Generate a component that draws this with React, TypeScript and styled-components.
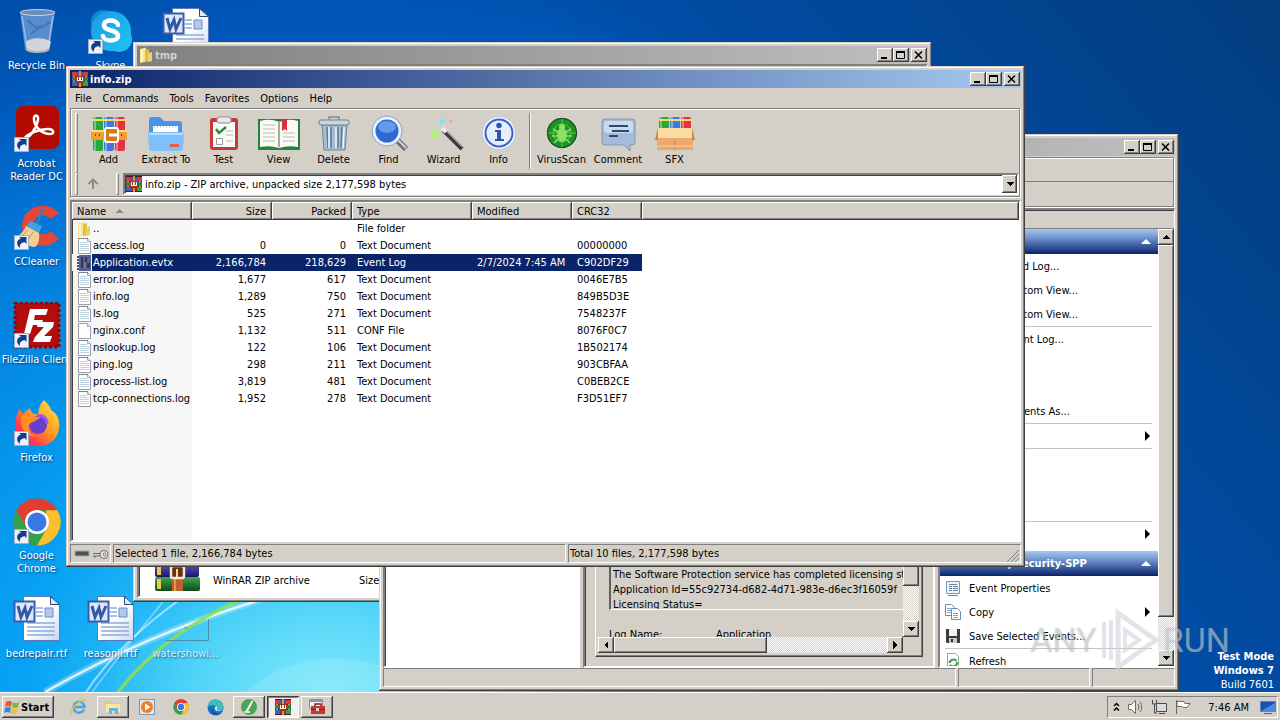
import React from "react";
import styled, { createGlobalStyle, css } from "styled-components";

const face = "#d4d0c8";
const navy = "#0a246a";

const raised = css`
  background-color: ${face};
  box-shadow: inset -1px -1px #404040, inset 1px 1px #ffffff, inset -2px -2px #808080;
`;

const sunken = css`
  border: 2px solid;
  border-color: #808080 #ffffff #ffffff #808080;
  box-shadow: inset 1px 1px #404040;
`;

const etched = css`
  border: 1px solid #808080;
  box-shadow: inset 1px 1px #ffffff, 1px 1px #ffffff;
`;

const GlobalStyle = createGlobalStyle`
  * { box-sizing: border-box; }
  body { margin: 0; }
  body, button, select, table {
    font-family: "DejaVu Sans Condensed", "Noto Sans", sans-serif;
    font-size: 11px;
    line-height: 13px;
    color: #000000;
  }
  button { border: 0; padding: 0; background: transparent; }
  svg { display: block; flex: none; }
`;

/* ---------- desktop ---------- */

const Screen = styled.div`
  display: flex;
  flex-direction: column;
  height: 100vh;
  overflow: hidden;
`;

const Desktop = styled.main`
  position: relative;
  flex: 1;
  min-height: 0;
  overflow: hidden;
  background:
    radial-gradient(ellipse 240px 130px at 330px 690px, rgba(130, 235, 250, 0.75), transparent),
    radial-gradient(ellipse 860px 740px at 330px 700px, #63dcf9 0%, #38c8f8 16%, #08a2f4 36%, #0590e8 54%, #0274d6 74%, #0058ba 90%, #004fac 100%);
`;

const Wallpaper = styled.svg`
  position: absolute;
  left: 0;
  bottom: 0;
`;

const CornerGlow = styled.div`
  position: absolute;
  inset: 0;
  background: linear-gradient(50deg, transparent 60%, rgba(4, 58, 118, 0.85) 100%);
`;

const IconGrid = styled.div`
  position: relative;
  display: grid;
  grid-template-columns: 73px repeat(2, 75px);
  grid-auto-rows: 98px;
`;

const Shortcut = styled.button<{ $col: number; $row: number; $faded?: boolean }>`
  grid-column: ${(p) => p.$col};
  grid-row: ${(p) => p.$row};
  display: flex;
  flex-direction: column;
  align-items: center;
  gap: 3px;
  padding: 8px 0 0;
  color: #ffffff;
  opacity: ${(p) => (p.$faded ? 0.8 : 1)};
  text-shadow: 1px 1px 2px rgba(0, 30, 80, 0.8);
  white-space: pre;
`;

const Build = styled.div`
  position: absolute;
  right: 6px;
  bottom: 0;
  display: flex;
  flex-direction: column;
  text-align: right;
  color: #ffffff;
  line-height: 14px;
`;

const Watermark = styled.div`
  position: absolute;
  right: 50px;
  bottom: 20px;
  display: flex;
  align-items: center;
  gap: 2px;
  color: rgba(205, 210, 216, 0.55);
  font-family: Roboto, sans-serif;
  font-size: 34px;
  line-height: 64px;
  text-shadow: 0 0 2px rgba(110, 120, 130, 0.3);
`;

/* ---------- windows ---------- */

const Frame = styled.section<{ $inset: string }>`
  position: absolute;
  inset: ${(p) => p.$inset};
  display: flex;
  flex-direction: column;
  padding: 4px;
  background: ${face};
  box-shadow: inset -1px -1px #404040, inset 1px 1px ${face}, inset -2px -2px #808080, inset 2px 2px #ffffff;
`;

const TitleBar = styled.header<{ $active?: boolean }>`
  display: flex;
  flex: none;
  align-items: center;
  gap: 2px;
  height: 18px;
  padding: 0 1px 0 2px;
  color: ${(p) => (p.$active ? "#ffffff" : face)};
  background: ${(p) =>
    p.$active ? "linear-gradient(to right, #0a246a, #a6caf0)" : "linear-gradient(to right, #808080, #c0c0c0)"};
`;

const Title = styled.h1`
  flex: 1;
  margin: 0;
  font-size: 11px;
  font-weight: bold;
`;

const CaptionButton = styled.button<{ $gap?: boolean }>`
  ${raised}
  display: flex;
  align-items: center;
  justify-content: center;
  width: 16px;
  height: 14px;
  margin-left: ${(p) => (p.$gap ? "0" : "-2px")};
`;

const TitleButtons = () => (
  <>
    <CaptionButton aria-label="Minimize">
      <svg width="12" height="10"><path d="M2 8h6" stroke="#000" strokeWidth="2" /></svg>
    </CaptionButton>
    <CaptionButton aria-label="Maximize">
      <svg width="12" height="10" fill="none" stroke="#000"><path d="M1.500 1.500h8v7h-8zM1 1.500h9M1 2.500h9" /></svg>
    </CaptionButton>
    <CaptionButton $gap aria-label="Close">
      <svg width="12" height="10"><path d="M2 1.500l7 7M9 1.500l-7 7" stroke="#000" strokeWidth="1.500" /></svg>
    </CaptionButton>
  </>
);

const StatusBar = styled.footer`
  display: flex;
  flex: none;
  gap: 2px;
  height: 19px;
`;

const StatusCell = styled.div<{ $width?: string }>`
  display: flex;
  flex: ${(p) => (p.$width ? `0 0 ${p.$width}` : "1 1 0")};
  align-items: center;
  gap: 2px;
  padding: 0 1px;
  border: 1px solid;
  border-color: #808080 #ffffff #ffffff #808080;
  white-space: nowrap;
`;

const Grip = styled.svg`
  margin: auto 0 0 auto;
`;

/* ---------- archive window ---------- */

const MenuBar = styled.nav`
  display: flex;
  flex: none;
  height: 20px;
`;

const MenuItem = styled.button`
  padding: 0 6px 0 5px;
`;

const ToolArea = styled.div`
  ${etched}
  flex: none;
  display: flex;
  flex-direction: column;
  height: 89px;
  margin-right: 1px;
  padding: 4px 0 1px 4px;
`;

const ToolRow = styled.div`
  display: flex;
  align-items: stretch;
  height: 60px;
`;

const Gripper = styled.div`
  flex: none;
  width: 3px;
  border: 1px solid;
  border-color: #ffffff #808080 #808080 #ffffff;
`;

const ToolSet = styled.div`
  display: flex;
  padding-left: 3px;
`;

const ToolButton = styled.button<{ $width?: number }>`
  display: flex;
  flex: none;
  flex-direction: column;
  align-items: center;
  gap: 1px;
  width: ${(p) => p.$width ?? 55}px;
  padding-top: 3px;
  white-space: nowrap;
`;

const ToolDivider = styled.div`
  width: 2px;
  margin: 0 3px 4px;
  border-left: 1px solid #808080;
  border-right: 1px solid #ffffff;
`;

const AddressRow = styled.div`
  display: flex;
  align-items: stretch;
  height: 22px;
`;

const UpButton = styled.button`
  display: flex;
  align-items: center;
  justify-content: center;
  width: 38px;
  padding-right: 8px;
`;

const Combo = styled.label`
  ${sunken}
  position: relative;
  display: flex;
  flex: 1;
  align-items: center;
  gap: 3px;
  margin-left: 4px;
  padding-left: 1px;
  background: #ffffff;
`;

const ComboSelect = styled.select`
  flex: 1;
  align-self: stretch;
  padding: 0;
  border: 0;
  outline: 0;
  appearance: none;
  background: transparent;
`;

const ComboArrow = styled.span`
  ${raised}
  display: flex;
  align-items: center;
  justify-content: center;
  align-self: stretch;
  width: 15px;
  pointer-events: none;
`;

const FileList = styled.div`
  ${sunken}
  flex: 1;
  min-height: 0;
  margin: 3px 0 2px;
  overflow: hidden;
  background: linear-gradient(to right, #f6f6f6 120px, #ffffff 120px);
`;

const Table = styled.table`
  width: 100%;
  table-layout: fixed;
  border-collapse: collapse;
`;

const HeadCell = styled.th<{ $right?: boolean }>`
  ${raised}
  height: 18px;
  padding: 0 6px 0 5px;
  font-weight: normal;
  text-align: ${(p) => (p.$right ? "right" : "left")};
`;

const HeadLabel = styled.span`
  display: flex;
  align-items: center;
  gap: 9px;
`;

const Row = styled.tr<{ $selected?: boolean }>`
  height: 17px;
  color: ${(p) => (p.$selected ? "#ffffff" : "#000000")};
  td:not(:last-child) { background: ${(p) => (p.$selected ? navy : "transparent")}; }
  td:first-child { background: ${(p) => (p.$selected ? `linear-gradient(to right, #f6f6f6 20px, ${navy} 20px)` : "transparent")}; }
`;

const Cell = styled.td<{ $right?: boolean }>`
  padding: 0 6px 0 5px;
  white-space: nowrap;
  text-align: ${(p) => (p.$right ? "right" : "left")};
`;

const NameCell = styled.td`
  padding: 0 0 0 5px;
`;

const NameLabel = styled.span`
  display: flex;
  align-items: center;
  gap: 2px;
  height: 17px;
  white-space: nowrap;
`;

/* ---------- folder window ---------- */

const FolderView = styled.div`
  ${sunken}
  flex: 1;
  display: flex;
  align-items: flex-end;
  padding: 0 0 4px 14px;
  background: #ffffff;
`;

const FolderText = styled.span<{ $first?: boolean }>`
  width: 146px;
  margin: 0 0 5px ${(p) => (p.$first ? "12px" : "0")};
  white-space: nowrap;
`;

/* ---------- event viewer ---------- */

const Rebar = styled.div`
  ${etched}
  flex: none;
  margin: 1px 1px 1px 0;
`;

const RebarRow = styled.div<{ $line?: boolean }>`
  height: 24px;
  border-bottom: ${(p) => (p.$line ? "1px solid #808080" : "0")};
`;

const Panes = styled.div`
  display: flex;
  flex: 1;
  gap: 3px;
  min-height: 0;
`;

const TreePane = styled.div`
  ${sunken}
  width: 197px;
  background: #ffffff;
`;

const DetailPane = styled.div`
  ${sunken}
  display: flex;
  flex: 1;
  min-width: 0;
  padding: 0 10px 9px;
`;

const DetailPanel = styled.div`
  display: flex;
  flex: 1;
  flex-direction: column;
  min-width: 0;
  padding: 2px 3px 3px 2px;
  border: 1px solid;
  border-color: #ffffff #404040 #404040 #ffffff;
  box-shadow: inset -1px -1px #808080;
`;

const DetailRow = styled.div<{ $grow?: boolean }>`
  display: flex;
  flex: ${(p) => (p.$grow ? "1" : "none")};
  min-height: 0;
`;

const DetailContent = styled.div`
  display: flex;
  flex: 1;
  flex-direction: column;
  justify-content: flex-end;
  min-width: 0;
  overflow: hidden;
  padding-left: 11px;
`;

const Message = styled.p`
  height: 64px;
  margin: 0;
  padding: 21px 0 0 2px;
  overflow: hidden;
  border-left: 2px solid #606060;
  border-bottom: 1px solid #ffffff;
  line-height: 15px;
  white-space: pre;
`;

const Fields = styled.dl`
  display: grid;
  grid-template-columns: 107px 1fr;
  height: 27px;
  margin: 0;
  padding-top: 17px;
  overflow: hidden;
  line-height: 15px;
  dd { margin: 0; }
`;

const ScrollTrack = styled.div<{ $row?: boolean }>`
  display: flex;
  flex: ${(p) => (p.$row ? "1" : "none")};
  flex-direction: ${(p) => (p.$row ? "row" : "column")};
  width: ${(p) => (p.$row ? "auto" : "16px")};
  height: ${(p) => (p.$row ? "16px" : "auto")};
  background: conic-gradient(#ffffff 25%, ${face} 0 50%, #ffffff 0 75%, ${face} 0) 0 0 / 2px 2px;
`;

const ScrollThumb = styled.div<{ $flex: string }>`
  ${raised}
  flex: ${(p) => p.$flex};
`;

const ScrollSpace = styled.div<{ $flex: string }>`
  flex: ${(p) => p.$flex};
`;

const ScrollButton = styled.button`
  ${raised}
  display: flex;
  flex: none;
  align-items: center;
  justify-content: center;
  width: 16px;
  height: 16px;
`;

const Corner = styled.div`
  width: 16px;
`;

const ActionPane = styled.aside`
  ${sunken}
  display: flex;
  flex-direction: column;
  width: 237px;
  border-right-width: 1px;
`;

const PaneCaption = styled.div`
  flex: none;
  height: 19px;
  border-bottom: 1px solid #808080;
`;

const ActionBody = styled.div`
  display: flex;
  flex: 1;
  min-height: 0;
`;

const ActionList = styled.div`
  flex: 1;
  min-width: 0;
  overflow: hidden;
  background: #ffffff;
`;

const GroupHeader = styled.h2<{ $spaced?: boolean }>`
  display: flex;
  align-items: center;
  justify-content: space-between;
  height: 25px;
  margin: ${(p) => (p.$spaced ? "5px" : "0")} 0 0;
  padding: 0 7px 0 5px;
  color: #ffffff;
  font-size: 11px;
  font-weight: bold;
  white-space: nowrap;
  background: linear-gradient(to bottom, #a6caf0, #5f83c0 45%, #0a246a);
`;

const Action = styled.button`
  display: flex;
  align-items: center;
  gap: 8px;
  width: 100%;
  height: 24px;
  padding: 0 6px 0 5px;
  white-space: nowrap;
  text-align: left;
  span { flex: 1; }
`;

const ActionGlyph = styled.i`
  flex: none;
  width: 16px;
`;

const Blank = styled.div<{ $rows: number }>`
  height: ${(p) => p.$rows * 24}px;
`;

const Rule = styled.hr`
  height: 1px;
  margin: 0 6px 0 5px;
  border: 0;
  background: #c4c4c4;
`;

/* ---------- taskbar ---------- */

const Taskbar = styled.footer`
  display: flex;
  flex: none;
  align-items: center;
  justify-content: space-between;
  height: 28px;
  padding: 1px 2px 0;
  background: ${face};
  border-top: 1px solid #ffffff;
`;

const TaskGroup = styled.div`
  display: flex;
  gap: 2px;
`;

const StartButton = styled.button`
  ${raised}
  display: flex;
  align-items: center;
  gap: 1px;
  width: 52px;
  height: 22px;
  margin-right: 7px;
  padding-left: 2px;
  font-weight: bold;
`;

const TaskButton = styled.button<{ $state?: "open" | "active" }>`
  display: flex;
  align-items: center;
  justify-content: center;
  width: 32px;
  height: 22px;
  ${(p) => p.$state === "open" && raised}
  ${(p) =>
    p.$state === "active" &&
    css`
      background: #f2f0ee;
      box-shadow: inset 1px 1px #404040, inset -1px -1px #ffffff, inset 2px 2px #808080;
    `}
`;

const Tray = styled.div`
  display: flex;
  align-items: center;
  gap: 7px;
  height: 22px;
  padding: 0 1px 0 5px;
  border: 1px solid;
  border-color: #808080 #ffffff #ffffff #808080;
`;

const Clock = styled.time`
  margin: 0 4px 0 10px;
`;

/* ---------- drawings ---------- */

const ArrowMark = ({ dir, color = "#000" }: { dir: "up" | "down" | "left" | "right"; color?: string }) => {
  const d = { up: "M4 0l4 4H0z", down: "M0 0h8L4 4z", left: "M4 0v8L0 4z", right: "M0 0v8l4-4z" }[dir];
  const tall = dir === "left" || dir === "right";
  return <svg width={tall ? 5 : 8} height={tall ? 8 : 5} shapeRendering="crispEdges"><path d={d} fill={color} /></svg>;
};

const HeaderArrow = () => <svg width="10" height="6"><path d="M5 0l5 5H0z" fill="#fff" /></svg>;
const SubmenuArrow = () => <svg width="8" height="10"><path d="M1 0v10l5-5z" fill="#000" /></svg>;

const LinkBadge = () => (
  <g>
    <path d="M1.500 31.500h14v14h-14z" fill="#eef2f8" stroke="#9fb0c8" />
    <path d="M7 44c-4-3-4-8 1-9.500L6 33h7.500v7l-2-2c-4 1-5 3-4.500 6z" fill="#123f8c" />
  </g>
);

const RarIcon = ({ size = 16 }: { size?: number }) => (
  <svg width={size} height={size} viewBox="0 0 16 16" shapeRendering="crispEdges">
    <path d="M0 0h16v16H0z" fill="#4a1a28" />
    <path d="M0 1h5v4H0zM11 1h5v4h-5z" fill="#d8343c" />
    <path d="M5 1h2v4H5zM9 1h2v4H9z" fill="#3a58b8" />
    <path d="M0 6h5v4H0zM11 6h5v4h-5z" fill="#2f7f58" />
    <path d="M0 11h5v4H0z" fill="#3f5cc8" />
    <path d="M11 11h5v4h-5z" fill="#39a03c" />
    <path d="M5 11h6v4H5z" fill="#8a3030" />
    <path d="M7 0h2v5H7zM7 12h2v4H7z" fill="#d89048" />
    <path d="M4 5h8v6H4z" fill="#b02c20" />
    <path d="M5 6h1v4H5zM10 6h1v4h-1zM6 9h4v1H6zM7 6h2v3H7z" fill="#fff3d0" />
    <path d="M1 5h2v1H1zM13 5h2v1h-2zM1 10h2v1H1zM13 10h2v1h-2z" fill="#d0a840" />
  </svg>
);

const BigRar = () => (
  <svg width="48" height="48" viewBox="0 0 48 48">
    <defs>
      <linearGradient id="bk1" x2="0" y2="1"><stop stopColor="#d04a5a" /><stop offset="1" stopColor="#7a1424" /></linearGradient>
      <linearGradient id="bk2" x2="0" y2="1"><stop stopColor="#5a58d8" /><stop offset="1" stopColor="#1c1468" /></linearGradient>
      <linearGradient id="bk3" x2="0" y2="1"><stop stopColor="#3fa84a" /><stop offset="1" stopColor="#0c4a1c" /></linearGradient>
    </defs>
    <rect x="2" y="6" width="44" height="13" rx="2" fill="url(#bk1)" />
    <rect x="2" y="19" width="44" height="14" rx="2" fill="url(#bk2)" />
    <rect x="2" y="33" width="45" height="14" rx="2" fill="url(#bk3)" />
    <path d="M4 8h4v10H4zM4 21h4v10H4zM4 35h4v10H4z" fill="#e8c850" />
    <path d="M19 5h11v42H19z" fill="#b8622c" />
    <path d="M21 5h2v42h-2z" fill="#e09850" />
    <rect x="18" y="22" width="13" height="12" rx="2" fill="#6a3010" stroke="#f2e8d8" strokeWidth="2.500" />
    <path d="M24 25v8" stroke="#ffd890" strokeWidth="2" />
  </svg>
);

const Folder = () => (
  <svg width="14" height="16" viewBox="0 0 14 16">
    <path d="M1 2l6-1.500v14L1 16z" fill="#f6e58e" />
    <path d="M6 3l4-1v12l-4 1z" fill="#e2bd3f" />
    <path d="M9 6l4-1v9l-4 1z" fill="#ecd06a" />
    <path d="M2 3l2-.5v12L2 15z" fill="#fff7c2" />
  </svg>
);

const FileGlyph = ({ kind }: { kind: string }) => {
  if (kind === "up") return <Folder />;
  if (kind === "evtx")
    return (
      <svg width="14" height="16">
        <path d="M2 0h12v16H2z" fill="#56618c" />
        <path d="M0 1h2v2H0zM0 4h2v2H0zM0 7h2v2H0zM0 10h2v2H0zM0 13h2v2H0z" fill="#454b70" />
        <path d="M4 2h2v11H4zM8 2h2v5H8zM10 8h3v5h-3z" fill="#33375c" />
        <path d="M7 8h2v5H7z" fill="#8a6f84" />
      </svg>
    );
  return (
    <svg width="14" height="16">
      <path d="M1.500.5h9l3 3v12h-12z" fill="#fdfefe" stroke="#9a9ea4" />
      <path d="M10.500.5v3h3" fill="#e4e8ec" stroke="#a8acb2" />
      {kind === "txt" && <path d="M3 4.500h7M3 6.500h9M3 8.500h9M3 10.500h9M3 12.500h9" stroke="#bcd2de" />}
      {kind === "txt" && <path d="M2 .5h9" stroke="#686c70" strokeDasharray="1 1" />}
    </svg>
  );
};

const WordDoc = () => (
  <svg width="48" height="48" viewBox="0 0 48 48">
    <defs><linearGradient id="pg" x2="1" y2="1"><stop offset=".5" stopColor="#fff" /><stop offset="1" stopColor="#c9d6f4" /></linearGradient></defs>
    <path d="M10.500.5h27l9 8v36h-36z" fill="url(#pg)" stroke="#5c78b8" />
    <path d="M37.500.5v8h9z" fill="#dfe8fa" stroke="#2c4678" />
    <path d="M23 12h7M23 16h7M23 20h7M14 27h28M14 31h28M14 35h28M14 39h28" stroke="#8faadc" strokeWidth="1.400" />
    <path d="M32 12h8v9h-8z" fill="#b4c6ea" stroke="#6e8cc8" />
    <path d="M1.500 5.500h20v20h-20z" fill="#dfe8f8" stroke="#3a5cae" strokeWidth="2" />
    <path d="M5 10l3 11 4-9 2 9 5-11" fill="none" stroke="#3257a8" strokeWidth="3" />
  </svg>
);

const Firefox = () => (
  <svg width="48" height="48" viewBox="0 0 48 48">
    <defs><linearGradient id="ff" x1="1" x2="0" y2="1"><stop stopColor="#fff04a" /><stop offset=".45" stopColor="#ff9a20" /><stop offset=".75" stopColor="#ff3850" /><stop offset="1" stopColor="#d8208a" /></linearGradient></defs>
    <path d="M31 0c3 3 6 6 7 10 7 4 9 11 8 18-1 11-10 18-21 18C12 46 2 38 2 26c0-7 2-11 4-17 2 2 3 3 3 5l8-6c0 2 2 5 4 6h4c1-6 2-10 6-14z" fill="url(#ff)" />
    <circle cx="25" cy="25" r="9" fill="#6a3cd0" />
    <path d="M9 16c6-3 9-1 12 1h6c-1 3-5 3-6 5-3 0-6 2-5 7 0 4 4 7 9 7-11 3-19-8-16-20z" fill="#ff9020" />
    <path d="M24 16c5-2 10 2 10 8" stroke="#9258f0" strokeWidth="3" fill="none" />
    <LinkBadge />
  </svg>
);

const ChromeMark = () => (
  <>
    <circle cx="24" cy="24" r="23.500" fill="#35a04c" />
    <path d="M24 .5a23.500 23.500 0 0 1 20.400 11.700H24L13.800 30 3.600 12.200A23.500 23.500 0 0 1 24 .5z" fill="#e23d30" />
    <path d="M44.400 12.200A23.500 23.500 0 0 1 24 47.500L34.200 30 33 12.200z" fill="#fbc02c" />
    <circle cx="24" cy="24" r="12" fill="#fff" />
    <circle cx="24" cy="24" r="9.500" fill="#3b78e7" />
  </>
);

const shortcuts: { label: string; col: number; row: number; faded?: boolean; icon: React.ReactNode }[] = [
  {
    label: "Recycle Bin", col: 1, row: 1,
    icon: (
      <svg width="48" height="48" viewBox="0 0 48 48">
        <path d="M7 4l5 37c3 4 20 4 24 0l6-37z" fill="#9cbfe6" opacity=".55" />
        <path d="M13 34c4-5 20-5 25 0l-2 8c-5 3-17 3-22 0z" fill="#e4e2dc" opacity=".85" />
        <ellipse cx="24.500" cy="4.500" rx="17.500" ry="3" fill="#6d8cb8" stroke="#c4d4e6" />
        <path d="M9 8l5 32M40 8l-5 32" stroke="#dfeaf6" strokeWidth="1.500" opacity=".5" />
        <path d="M15 12c8 10 12 10 22 2M18 26l10-8" stroke="#3a68b0" strokeWidth="2" fill="none" opacity=".7" />
        <path d="M13 41c4 4 19 4 23 0" stroke="#b7b4ac" strokeWidth="2" fill="none" />
      </svg>
    ),
  },
  {
    label: "Skype", col: 2, row: 1,
    icon: (
      <svg width="48" height="48" viewBox="0 0 48 48">
        <defs><linearGradient id="sk" x2="1" y2="1"><stop stopColor="#1a9be0" /><stop offset="1" stopColor="#20c4f4" /></linearGradient></defs>
        <circle cx="16" cy="14" r="12" fill="#1486d8" /><circle cx="32" cy="31" r="13" fill="#25b9ee" />
        <circle cx="24" cy="23" r="20" fill="url(#sk)" />
        <path d="M31 17c-1-6-14-6-14 0 0 7 14 4 14 11 0 6-14 6-15 0" stroke="#fff" strokeWidth="4.500" fill="none" strokeLinecap="round" />
        <LinkBadge />
      </svg>
    ),
  },
  { label: "", col: 3, row: 1, icon: <WordDoc /> },
  {
    label: "Acrobat\nReader DC", col: 1, row: 2,
    icon: (
      <svg width="48" height="48" viewBox="0 0 48 48">
        <rect x="3" y="0" width="43" height="43" rx="7" fill="#b30b00" />
        <path d="M11 33c5-1 12-9 14-19 1-6-5-6-4 0 1 8 9 14 16 14 5 0 4-5-2-5-8 0-20 4-24 10z" fill="none" stroke="#fff" strokeWidth="2.500" />
        <LinkBadge />
      </svg>
    ),
  },
  {
    label: "CCleaner", col: 1, row: 3,
    icon: (
      <svg width="48" height="48" viewBox="0 0 48 48">
        <path d="M46 9C37-3 12-1 9 20c-1 18 20 30 37 15l-8-8c-7 6-17 3-17-7 0-9 11-12 17-5z" fill="#e4473a" />
        <path d="M29 4l2 1-6 16-3-1z" fill="#2c84bc" />
        <path d="M17 17l12 5-3 7-13-6z" fill="#3fa2dc" />
        <path d="M13 22l13 7c1 7-1 12-4 14-7 0-16-6-19-10 4-2 8-6 10-11z" fill="#f0cf96" />
        <path d="M9 32l6-6M15 36l5-8" stroke="#c89c58" />
        <LinkBadge />
      </svg>
    ),
  },
  {
    label: "FileZilla Client", col: 1, row: 4,
    icon: (
      <svg width="48" height="48" viewBox="0 0 48 48">
        <path d="M2 1h44v44H2z" fill="#b40d0d" stroke="#8a0a0a" strokeWidth="3" strokeDasharray="3 2" />
        <path d="M11 32l6-25h18l-2 6H22l-1 5h9l-2 5h-8l-3 9z" fill="#fff" />
        <path d="M25 20h16l-1 5-9 9h8l-2 6H20l2-5 9-10h-7z" fill="#fff" />
        <LinkBadge />
      </svg>
    ),
  },
  { label: "Firefox", col: 1, row: 5, icon: <Firefox /> },
  { label: "Google\nChrome", col: 1, row: 6, icon: <svg width="48" height="48" viewBox="0 0 48 48"><ChromeMark /><LinkBadge /></svg> },
  { label: "bedrepair.rtf", col: 1, row: 7, icon: <WordDoc /> },
  { label: "reasonji.rtf", col: 2, row: 7, icon: <WordDoc /> },
  {
    label: "watershowi...", col: 3, row: 7, faded: true,
    icon: <svg width="48" height="48"><path d="M4 44.500h42.500V23M22 31l4 2" fill="none" stroke="#4c7f92" /></svg>,
  },
];

const TubeSet = ({ y, h }: { y: number; h: number }) => (
  <>
    <rect x="2" y={y} width="10" height={h} rx="2" fill="#28a83c" />
    <rect x="13" y={y} width="10" height={h} rx="2" fill="#3f78e0" />
    <rect x="24" y={y} width="10" height={h} rx="2" fill="#e03444" />
    <path d={`M4 ${y}v${h}M15 ${y}v${h}M26 ${y}v${h}`} stroke="#fff" strokeWidth="2" opacity=".35" />
    <path d={`M2 ${y + 3}h10M13 ${y + 3}h10M24 ${y + 3}h10`} stroke="#f6dc5c" strokeWidth="2" />
  </>
);

const tools: { label: string; width?: number; divider?: boolean; icon: React.ReactNode }[] = [
  {
    label: "Add",
    icon: (
      <>
        <TubeSet y={1} h={34} />
        <path d="M0 14h36v10H0z" fill="#f0a030" /><path d="M0 15h36" stroke="#ffd890" strokeWidth="2" />
        <rect x="14" y="12" width="13" height="14" rx="2" fill="#d87818" stroke="#fff" strokeWidth="2" />
        <path d="M18 19h8" stroke="#fff" strokeWidth="3" />
        <path d="M4 19h1M8 19h1M30 19h1" stroke="#7a4000" strokeWidth="2" />
      </>
    ),
  },
  {
    label: "Extract To", width: 60,
    icon: (
      <>
        <path d="M1 4q0-3 3-3h8l4 4h15q3 0 3 3v24H1z" fill="#4b93e8" />
        <path d="M5 10h25v10H5z" fill="#fff" /><path d="M6 11h24" stroke="#9ab8d8" strokeDasharray="1 2" />
        <path d="M0 18q0-2 2-2h32q2 0 2 2l-1 14q0 3-3 3H4q-3 0-3-3z" fill="#7fc0fa" />
        <path d="M1 18h34" stroke="#b8defc" strokeWidth="2" /><path d="M22 28h9v3h-9z" fill="#e06048" />
      </>
    ),
  },
  {
    label: "Test",
    icon: (
      <>
        <rect x="4" y="2" width="28" height="32" rx="3" fill="#c83838" /><path d="M7 6h22v25H7z" fill="#fbfbf8" />
        <rect x="11" y="1" width="14" height="6" rx="2" fill="#e8e8ea" stroke="#8c8c94" />
        <path d="M10 13l3 4 7-6" stroke="#2c8c40" strokeWidth="2.500" fill="none" />
        <path d="M10.500 22.500h6v6h-6z" fill="#fff" stroke="#9c9ca0" /><path d="M20 15h7M20 19h7M20 25h7" stroke="#b4b4b8" />
      </>
    ),
  },
  {
    label: "View",
    icon: (
      <>
        <path d="M-3 3h42v31H-3z" fill="#24843c" />
        <path d="M-1 5q10-3 19 1 9-4 19-1v26q-10-2-19 1-9-3-19-1z" fill="#fbfaf4" />
        <path d="M18 5v26" stroke="#a8a8a0" strokeWidth="2" />
        <path d="M2 9h12M2 13h12M2 17h12M2 21h12M2 25h12M22 17h12M22 21h12M22 25h12" stroke="#bcbcb8" />
        <path d="M21 4h5v11l-2-2-3 2z" fill="#d8303c" />
      </>
    ),
  },
  {
    label: "Delete",
    icon: (
      <>
        <path d="M6 9h25l-2 25H8z" fill="#a6bcd4" stroke="#6e8498" />
        <path d="M11 11l1 21M15 11v21M22 11v21M26 11l-1 21" stroke="#5c7896" strokeWidth="1.500" />
        <path d="M13 11v21M20 11v21M28 11l-1 21" stroke="#f0f6fc" strokeWidth="1.500" />
        <rect x="3" y="4" width="30" height="5" rx="2" fill="#cdd6de" stroke="#70808c" />
        <path d="M13 4V1h10v3" fill="none" stroke="#808890" strokeWidth="1.500" />
      </>
    ),
  },
  {
    label: "Find",
    icon: (
      <>
        <path d="M26 24l9 9" stroke="#6c7278" strokeWidth="6" /><path d="M27 24l8 8" stroke="#cfd4d8" strokeWidth="2" />
        <circle cx="16" cy="15" r="13" fill="#2c68d8" stroke="#e8f2fc" strokeWidth="3" />
        <circle cx="16" cy="15" r="15" fill="none" stroke="#90a8c4" />
        <ellipse cx="16" cy="11" rx="9" ry="6" fill="#7cacf4" opacity=".7" />
      </>
    ),
  },
  {
    label: "Wizard",
    icon: (
      <>
        <path d="M17 14l19 19" stroke="#3c3c40" strokeWidth="4" /><path d="M18 13l18 18" stroke="#a4a4a8" />
        <path d="M16 12l4 4" stroke="#f0e8f0" strokeWidth="4" />
        <path d="M8 11l2 4 4-1-2 4 2 4-4-1-3 3-1-4-4-2 4-2z" fill="#b4f080" />
        <path d="M15 0l2 4 4 1-4 2-1 4-2-4-4-1 4-2z" fill="#90e0ea" /><circle cx="25" cy="5" r="2" fill="#f0a8b4" />
      </>
    ),
  },
  {
    label: "Info",
    icon: (
      <>
        <circle cx="18" cy="17" r="16.500" fill="#f4f7fc" stroke="#b8c8e4" /><circle cx="18" cy="17" r="13.500" fill="#e8effc" stroke="#3c64c4" strokeWidth="2" />
        <circle cx="18" cy="9.500" r="2.700" fill="#2c54b8" /><path d="M14 14h6v9h3v2h-9v-2h2v-7h-2z" fill="#2c54b8" />
      </>
    ),
  },
  {
    label: "VirusScan", divider: true,
    icon: (
      <>
        <circle cx="18" cy="17" r="16" fill="#e0e8dc" /><circle cx="18" cy="17" r="14.500" fill="#1d9420" stroke="#24502a" strokeWidth="1.500" />
        <circle cx="18" cy="17" r="9" fill="none" stroke="#52c84c" /><path d="M4 17h28M18 3v28" stroke="#52c84c" />
        <ellipse cx="18" cy="19" rx="5" ry="7" fill="#8be068" /><circle cx="18" cy="11" r="3" fill="#8be068" />
        <path d="M9 13l5 3M27 13l-5 3M8 20h5M28 20h-5M10 27l4-4M26 27l-4-4" stroke="#8be068" strokeWidth="1.500" />
      </>
    ),
  },
  {
    label: "Comment", width: 58,
    icon: (
      <>
        <path d="M5 3h27q3 0 3 3v20q0 3-3 3h-2v6l-6-6H5q-3 0-3-3V6q0-3 3-3z" fill="#a4bcda" stroke="#7f98b8" />
        <rect x="4" y="5" width="29" height="12" rx="3" fill="#dce8f6" opacity=".7" />
        <path d="M9 10h19M12 15h17M9 20h9" stroke="#2e4870" strokeWidth="2" />
      </>
    ),
  },
  {
    label: "SFX",
    icon: (
      <>
        <TubeSet y={1} h={14} />
        <path d="M0 15h36v19H0z" fill="#eda870" /><path d="M2 12h32l4 10H-2z" fill="#fbdca0" />
        <path d="M-2 24L1 12v12zM38 24l-3-12v12z" fill="#c8824c" /><path d="M18 24v10" stroke="#c88450" /><path d="M0 30h36" stroke="#f4bc8c" strokeWidth="2" />
      </>
    ),
  },
];

const files: [string, string, string, string, string, string, string][] = [
  ["up", "..", "", "", "File folder", "", ""],
  ["txt", "access.log", "0", "0", "Text Document", "", "00000000"],
  ["evtx", "Application.evtx", "2,166,784", "218,629", "Event Log", "2/7/2024 7:45 AM", "C902DF29"],
  ["txt", "error.log", "1,677", "617", "Text Document", "", "0046E7B5"],
  ["txt", "info.log", "1,289", "750", "Text Document", "", "849B5D3E"],
  ["txt", "ls.log", "525", "271", "Text Document", "", "7548237F"],
  ["conf", "nginx.conf", "1,132", "511", "CONF File", "", "8076F0C7"],
  ["txt", "nslookup.log", "122", "106", "Text Document", "", "1B502174"],
  ["txt", "ping.log", "298", "211", "Text Document", "", "903CBFAA"],
  ["txt", "process-list.log", "3,819", "481", "Text Document", "", "C0BEB2CE"],
  ["txt", "tcp-connections.log", "1,952", "278", "Text Document", "", "F3D51EF7"],
];

const ArchiveWindow = () => (
  <Frame $inset="66px 255px 125px 66px">
    <TitleBar $active>
      <RarIcon />
      <Title>info.zip</Title>
      <TitleButtons />
    </TitleBar>
    <MenuBar>
      {["File", "Commands", "Tools", "Favorites", "Options", "Help"].map((m) => <MenuItem key={m}>{m}</MenuItem>)}
    </MenuBar>
    <ToolArea>
      <ToolRow>
        <Gripper />
        <ToolSet>
          {tools.map((t) => (
            <React.Fragment key={t.label}>
              {t.divider && <ToolDivider />}
              <ToolButton $width={t.width}>
                <svg width="36" height="36" viewBox="0 0 36 36" overflow="visible">{t.icon}</svg>
                {t.label}
              </ToolButton>
            </React.Fragment>
          ))}
        </ToolSet>
      </ToolRow>
      <AddressRow>
        <Gripper />
        <UpButton aria-label="Up one level">
          <svg width="12" height="12" fill="none" stroke="#8c8a86" strokeWidth="2"><path d="M6 11V2M1.500 6L6 1.500 10.500 6" /></svg>
        </UpButton>
        <Gripper />
        <Combo>
          <RarIcon />
          <ComboSelect aria-label="Archive path">
            <option>info.zip - ZIP archive, unpacked size 2,177,598 bytes</option>
          </ComboSelect>
          <ComboArrow><ArrowMark dir="down" /></ComboArrow>
        </Combo>
      </AddressRow>
    </ToolArea>
    <FileList>
      <Table>
        <colgroup>
          <col width="120" /><col width="80" /><col width="80" /><col width="120" /><col width="100" /><col width="70" /><col />
        </colgroup>
        <thead>
          <tr>
            <HeadCell><HeadLabel>Name <ArrowMark dir="up" color="#8c8984" /></HeadLabel></HeadCell>
            <HeadCell $right>Size</HeadCell>
            <HeadCell $right>Packed</HeadCell>
            <HeadCell>Type</HeadCell>
            <HeadCell>Modified</HeadCell>
            <HeadCell>CRC32</HeadCell>
            <HeadCell />
          </tr>
        </thead>
        <tbody>
          {files.map(([kind, name, size, packed, type, modified, crc]) => (
            <Row key={name} $selected={kind === "evtx"}>
              <NameCell><NameLabel><FileGlyph kind={kind} />{name}</NameLabel></NameCell>
              <Cell $right>{size}</Cell>
              <Cell $right>{packed}</Cell>
              <Cell>{type}</Cell>
              <Cell>{modified}</Cell>
              <Cell>{crc}</Cell>
              <Cell />
            </Row>
          ))}
        </tbody>
      </Table>
    </FileList>
    <StatusBar>
      <StatusCell $width="41px">
        <svg width="18" height="10"><path d="M3 2h14v5H3z" fill="#4c5458" stroke="#a4a8aa" /></svg>
        <svg width="17" height="12" fill="none" stroke="#6c6a66"><path d="M1 5.500h8M1 8h8M3 8v2" /><circle cx="12" cy="6.500" r="4" fill="#eceae6" /><circle cx="12.500" cy="6.500" r="1.500" /></svg>
      </StatusCell>
      <StatusCell>Selected 1 file, 2,166,784 bytes</StatusCell>
      <StatusCell>
        Total 10 files, 2,177,598 bytes
        <Grip width="13" height="13" stroke="#808080"><path d="M1 13L13 1M5 13l8-8M9 13l4-4" /></Grip>
      </StatusCell>
    </StatusBar>
  </Frame>
);

const FolderWindow = () => (
  <Frame $inset="42px 348px 90px 133px">
    <TitleBar>
      <Folder />
      <Title>tmp</Title>
      <TitleButtons />
    </TitleBar>
    <FolderView>
      <BigRar />
      <FolderText $first>WinRAR ZIP archive</FolderText>
      <FolderText>Size</FolderText>
    </FolderView>
  </Frame>
);

const EventViewer = () => (
  <Frame $inset="134px 101px 1px 379px">
    <TitleBar>
      <Title />
      <TitleButtons />
    </TitleBar>
    <Rebar>
      <RebarRow $line />
      <RebarRow />
    </Rebar>
    <Panes>
      <TreePane />
      <DetailPane>
        <DetailPanel>
          <DetailRow $grow>
            <DetailContent>
              <Message>
                {"The Software Protection service has completed licensing status check.\nApplication Id=55c92734-d682-4d71-983e-d6ec3f16059f\nLicensing Status="}
              </Message>
              <Fields><dt>Log Name:</dt><dd>Application</dd></Fields>
            </DetailContent>
            <ScrollTrack>
              <ScrollThumb $flex="1" />
              <ScrollSpace $flex="0 0 35px" />
              <ScrollButton aria-label="Scroll down"><ArrowMark dir="down" /></ScrollButton>
            </ScrollTrack>
          </DetailRow>
          <DetailRow>
            <ScrollTrack $row>
              <ScrollButton aria-label="Scroll left"><ArrowMark dir="left" /></ScrollButton>
              <ScrollThumb $flex="153" />
              <ScrollSpace $flex="120" />
              <ScrollButton aria-label="Scroll right"><ArrowMark dir="right" /></ScrollButton>
            </ScrollTrack>
            <Corner />
          </DetailRow>
        </DetailPanel>
      </DetailPane>
      <ActionPane>
        <PaneCaption />
        <ActionBody>
          <ActionList>
            <GroupHeader><span /><HeaderArrow /></GroupHeader>
            <Action><ActionGlyph /><span>Open Saved Log...</span></Action>
            <Action><ActionGlyph /><span>Create Custom View...</span></Action>
            <Action><ActionGlyph /><span>Import Custom View...</span></Action>
            <Rule />
            <Action><ActionGlyph /><span>Filter Current Log...</span></Action>
            <Blank $rows={2} />
            <Action><ActionGlyph /><span>Save All Events As...</span></Action>
            <Rule />
            <Action aria-label="View"><span /><SubmenuArrow /></Action>
            <Rule />
            <Blank $rows={3} />
            <Rule />
            <Action aria-label="Help"><span /><SubmenuArrow /></Action>
            <GroupHeader $spaced><span>Event 1003, Security-SPP</span><HeaderArrow /></GroupHeader>
            <Action>
              <svg width="16" height="16"><path d="M1.500 1.500h13v12h-13z" fill="#eef3f8" stroke="#7c94b0" /><path d="M4 4.500h8M4 6.500h3M8 6.500h5M4 8.500h3M8 8.500h5M4 10.500h3M8 10.500h5M3 15.500h10" stroke="#6684a8" /></svg>
              <span>Event Properties</span>
            </Action>
            <Action>
              <svg width="16" height="16" fill="#fff" stroke="#6c8cb8"><path d="M.5.5h6l3 3v8h-9z" /><path d="M6.500 4.500h6l3 3v8h-9z" /><path d="M2 4.500h4M2 6.500h4M2 8.500h4M8 9.500h5M8 11.500h5M8 13.500h5" stroke="#88a4cc" /></svg>
              <span>Copy</span><SubmenuArrow />
            </Action>
            <Action>
              <svg width="16" height="16"><path d="M1 1h14v14H2l-1-1z" fill="#3c3c40" /><path d="M4 1h8v7H4z" fill="#f0f0f0" /><path d="M4 10h8v5H4z" fill="#c8c8cc" /><path d="M6 11h2v3H6z" fill="#303034" /></svg>
              <span>Save Selected Events...</span>
            </Action>
            <Rule />
            <Action>
              <svg width="16" height="16"><path d="M2.500.5h8l3 3v12h-11z" fill="#fff" stroke="#90a8a0" /><path d="M4.500 10a4 4 0 0 1 7-2M12 9a4 4 0 0 1-7 3" fill="none" stroke="#3aa048" strokeWidth="2" /></svg>
              <span>Refresh</span>
            </Action>
          </ActionList>
          <ScrollTrack>
            <ScrollButton aria-label="Scroll up"><ArrowMark dir="up" /></ScrollButton>
            <ScrollThumb $flex="373" />
            <ScrollSpace $flex="33" />
            <ScrollButton aria-label="Scroll down"><ArrowMark dir="down" /></ScrollButton>
          </ScrollTrack>
        </ActionBody>
      </ActionPane>
    </Panes>
    <StatusBar>
      <StatusCell />
      <StatusCell $width="132px" />
      <StatusCell $width="83px" />
    </StatusBar>
  </Frame>
);

const taskItems: { name: string; state?: "open" | "active"; icon: React.ReactNode }[] = [
  {
    name: "Internet Explorer",
    icon: (
      <svg width="18" height="18" viewBox="0 0 18 18" fill="none">
        <path d="M14 11.500a5.500 5.500 0 1 1 .5-2.500H5" stroke="#4aa8e0" strokeWidth="2.500" />
        <path d="M2 16C-1 12 11 0 16 2" stroke="#e8c040" strokeWidth="1.500" />
      </svg>
    ),
  },
  {
    name: "Explorer", state: "open",
    icon: (
      <svg width="18" height="16"><path d="M1 2h6l1 2h8v9H1z" fill="#e8cc68" /><path d="M2 5h14v8H2z" fill="#f8e8a0" /><path d="M5 9h9v6h-3v-3H8v3H5z" fill="#68b4e4" /></svg>
    ),
  },
  {
    name: "Media Player",
    icon: (
      <svg width="16" height="16"><path d="M.5.5h15v15H.5z" fill="#d8e8f4" stroke="#6c9cc4" /><circle cx="8" cy="8" r="6" fill="#f08020" /><path d="M6 4.500v7L11.500 8z" fill="#fff" /></svg>
    ),
  },
  { name: "Chrome", icon: <svg width="16" height="16" viewBox="0 0 48 48"><ChromeMark /></svg> },
  {
    name: "Edge",
    icon: (
      <svg width="17" height="17" viewBox="0 0 17 17"><circle cx="8.500" cy="8.500" r="8" fill="#1b6cc4" /><path d="M.6 8C1 3 5 .5 8.500.5c5 0 8 3.500 8 7 0 3-3 4.500-6 3.500 1-5-6-6-9.900-3z" fill="#38c0b8" /><path d="M6 9c-1 4 3 7 8 5-4 4-12 1-8-5z" fill="#114a8c" /><path d="M9 7c2 1 1.500 3 1 4 2 1 5 0 6.300-2-1 3-5 4-7.500 2.500C7 10 7.500 8 9 7z" fill="#fff" opacity=".8" /></svg>
    ),
  },
  {
    name: "Editor", state: "open",
    icon: <svg width="18" height="18"><circle cx="9" cy="9" r="8" fill="#4ca458" /><path d="M5 14L12 2l1 2-5 9z" fill="#f4f8ec" /><path d="M4 14h6" stroke="#d8ecd0" strokeWidth="2" /></svg>,
  },
  { name: "info.zip", state: "active", icon: <RarIcon /> },
  {
    name: "Event Viewer", state: "open",
    icon: (
      <svg width="18" height="18"><path d="M1.500 1.500h13v9h-13z" fill="#f0f0f0" stroke="#8c8c90" /><path d="M2 3h12" stroke="#8898b0" strokeWidth="2" /><path d="M3 8h14v8H3z" fill="#c43838" /><path d="M7 8V6h6v2" fill="none" stroke="#802020" strokeWidth="1.500" /><path d="M3 11.500h14" stroke="#801c1c" /><path d="M8 10h3v3H8z" fill="#e8d8d0" /></svg>
    ),
  },
];

const App = () => (
  <Screen>
    <GlobalStyle />
    <Desktop>
      <CornerGlow />
      <Wallpaper width="400" height="140" viewBox="0 0 400 140" fill="none">
        <path d="M45 140Q150 80 270 45" stroke="#fff" strokeWidth="7" opacity=".25" />
        <path d="M45 140Q150 80 270 45" stroke="#fff" strokeWidth="2.500" opacity=".8" />
        <path d="M86 140Q120 90 182 46" stroke="#fff" strokeWidth="2" opacity=".55" />
        <path d="M92 140Q130 90 166 46" stroke="#fff" strokeWidth="1.500" opacity=".4" />
        <path d="M118 140Q165 80 244 46" stroke="#8fe04c" strokeWidth="3" opacity=".9" />
        <path d="M245 140Q310 85 400 120V140z" fill="#fff" opacity=".12" />
      </Wallpaper>
      <IconGrid>
        {shortcuts.map((s) => (
          <Shortcut key={`${s.col}-${s.row}`} $col={s.col} $row={s.row} $faded={s.faded} aria-label={s.label || "Document"}>
            {s.icon}
            {s.label}
          </Shortcut>
        ))}
      </IconGrid>
      <Build>
        <b>Test Mode</b>
        <b>Windows 7</b>
        <span>Build 7601</span>
      </Build>
      <FolderWindow />
      <EventViewer />
      <ArchiveWindow />
      <Watermark>
        ANY
        <svg width="62" height="64" viewBox="0 0 62 64" fill="none" stroke="rgba(205,210,216,.6)" strokeWidth="4">
          <path d="M5 14v36M12 12v40" /><path d="M19 5l38 27-38 27z" strokeWidth="5" /><path d="M26 22l14 10-14 10z" />
        </svg>
        RUN
      </Watermark>
    </Desktop>
    <Taskbar>
      <TaskGroup>
        <StartButton>
          <svg width="16" height="16" viewBox="0 0 16 16"><path d="M2 3q3-2 6 0L7 8Q4 6 1 8z" fill="#e8582c" /><path d="M9 3q3 2 6 0l-1 5q-3 2-6 0z" fill="#7cb83c" /><path d="M1 9q3-2 6 0l-1 5q-3-2-6 0z" fill="#3c84d8" /><path d="M8 9q3 2 6 0l-1 5q-3 2-6 0z" fill="#f4c030" /></svg>
          Start
        </StartButton>
        {taskItems.map((t) => <TaskButton key={t.name} $state={t.state} aria-label={t.name}>{t.icon}</TaskButton>)}
      </TaskGroup>
      <Tray>
        <svg width="7" height="10" fill="none" stroke="#000" strokeWidth="1.500"><path d="M1 4l2.500-2.500L6 4M1 8.500L3.500 6 6 8.500" /></svg>
        <svg width="17" height="16" fill="none" stroke="#6c6a68"><path d="M1.500 5.500h3l4-4v13l-4-4h-3z" fill="#fff" /><path d="M11 5q2 3 0 6M13 3q3.500 5 0 10" /></svg>
        <svg width="17" height="16" fill="none" stroke="#4c4a48"><path d="M5.500 4.500h10v8h-10z" fill="#d8dcdc" /><path d="M8 14.500h6M1.500 1v4h4V1M3.500 5v9H6" /></svg>
        <svg width="16" height="16" fill="#fff" stroke="#6c6a68"><path d="M1.500 1v14" /><path d="M2 2.500h7l1 2h5l-3 4H8l-1-1H2z" /></svg>
        <Clock>7:46 AM</Clock>
        <svg width="16" height="15"><path d="M.5 1.500h15v10H.5z" fill="#1c50b0" stroke="#5884c8" /><path d="M1 11L15 3v8z" fill="#4c8ce0" /><path d="M4 13.500h8" stroke="#506478" /></svg>
      </Tray>
    </Taskbar>
  </Screen>
);

export default App;
